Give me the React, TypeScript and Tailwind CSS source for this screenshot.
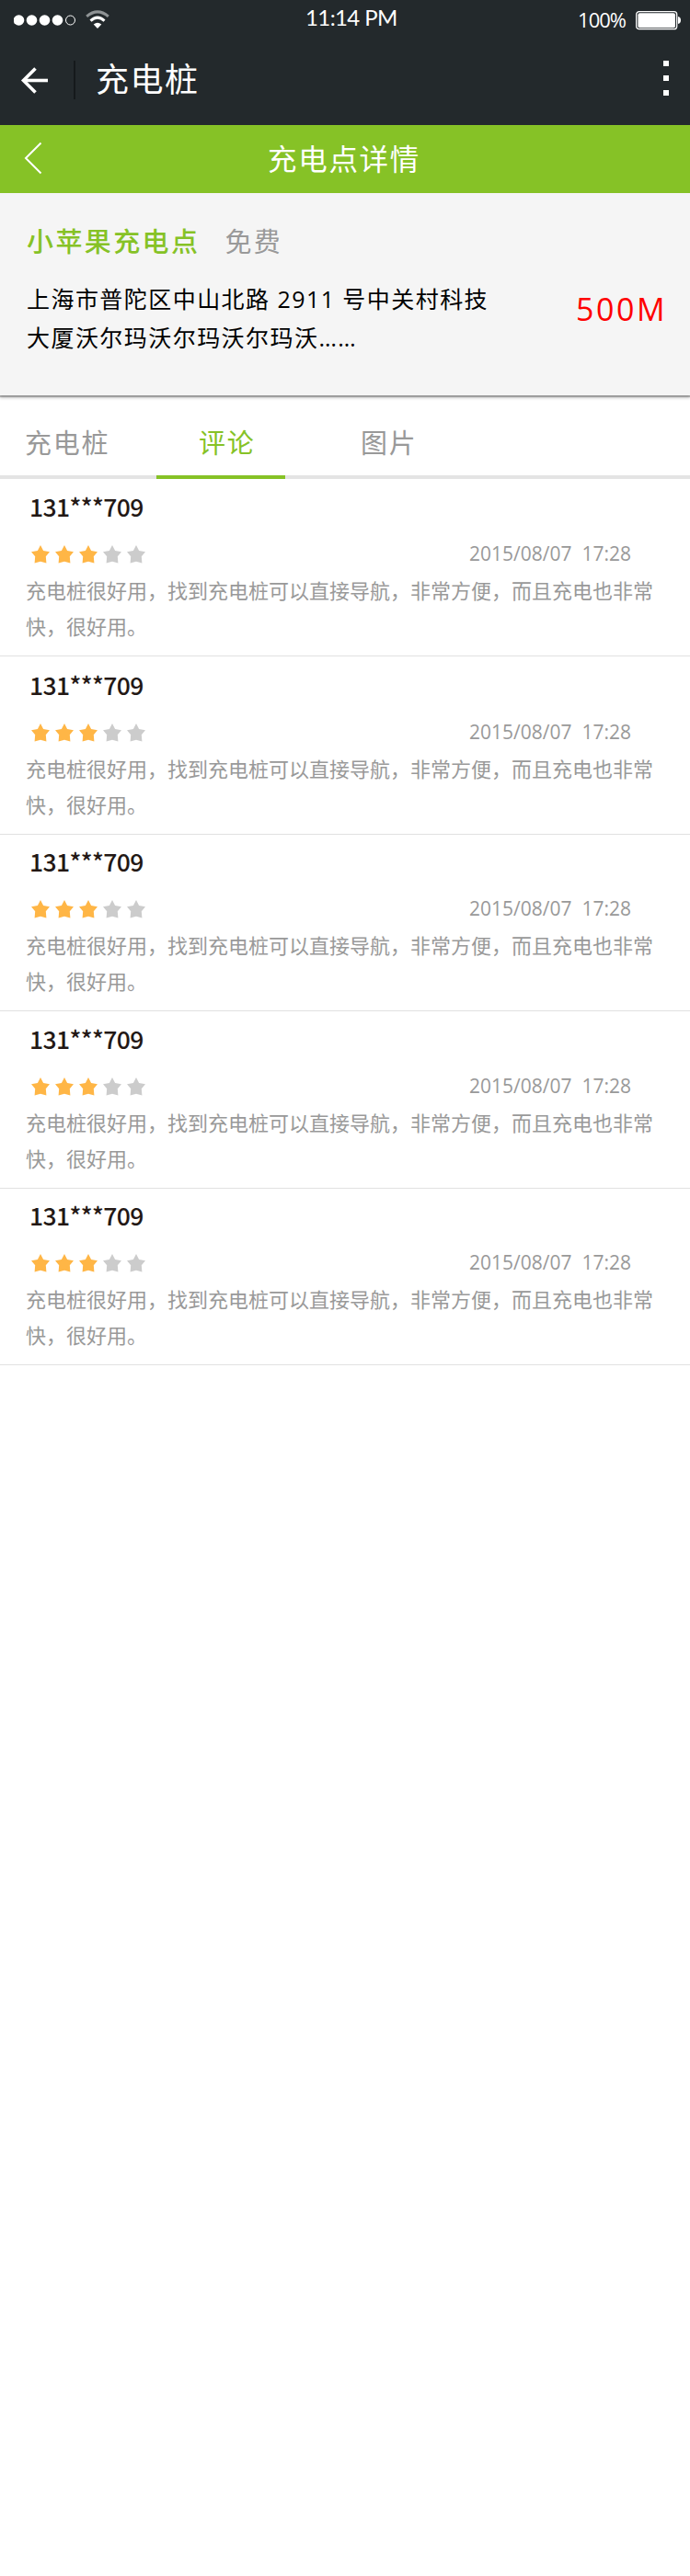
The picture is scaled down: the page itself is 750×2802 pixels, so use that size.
const uiFont = "font-['Open_Sans','Noto_Sans_CJK_SC',sans-serif]";

const reviews = [
  { height: 'h-[193px]', score: 3 },
  { height: 'h-[194px]', score: 3 },
  { height: 'h-[192px]', score: 3 },
  { height: 'h-[193px]', score: 3 },
  { height: 'h-[192px]', score: 3 },
];

function StatusBar() {
  return (
    <div className="grid h-11 grid-cols-3 text-white">
      <div className="flex items-start pl-[15px]">
        <svg className="mt-[11px]" width="106" height="22" viewBox="0 0 106 22" fill="none">
          <g fill="#fff">
            <circle cx="5.5" cy="11" r="5.8" />
            <circle cx="19.5" cy="11" r="5.8" />
            <circle cx="33.5" cy="11" r="5.8" />
            <circle cx="47.5" cy="11" r="5.8" />
          </g>
          <circle cx="61.5" cy="11" r="5" stroke="#fff" strokeWidth="1" />
          <path d="M79.200 6.800 Q91 -3 102.800 6.800" stroke="#8f9395" strokeWidth="3" />
          <path d="M83.500 11.600 Q91 4.700 98.500 11.600" stroke="#fff" strokeWidth="3" />
          <path d="M86.700 15.400 Q91 12 95.300 15.400 L91 20 Z" fill="#fff" />
        </svg>
      </div>
      <div className="pl-[82px] pt-[6px] font-['Lato'] text-[24px] leading-[26px] tracking-[-0.6px] whitespace-nowrap">
        11:14 PM
      </div>
      <div className="flex items-start justify-end pr-[9px]">
        <span className="mt-[8px] mr-[11px] font-['Open_Sans'] text-[22px] leading-[26px] font-normal tracking-[-1px]">100%</span>
        <svg className="mt-[12px]" width="50" height="21" viewBox="0 0 50 21" fill="none">
          <rect x="0.700" y="0.700" width="44" height="19" rx="3" stroke="#fff" strokeWidth="1.300" />
          <rect x="2.400" y="2.200" width="40.600" height="16" rx="2" fill="#fff" />
          <path d="M46 6 Q49 6.500 49 10 Q49 13.500 46 14 Z" fill="#fff" />
        </svg>
      </div>
    </div>
  );
}

function AppBar() {
  return (
    <div className="flex h-[92px] pl-[22px] text-white">
      <svg className="mt-[28px]" width="32" height="32" viewBox="0 0 32 32" fill="none" stroke="#fff" strokeWidth="3.600">
        <path d="M30 15.500 H4" />
        <path d="M16.500 2.500 L3.500 15.500 L16.500 28.500" />
      </svg>
      <div className="mt-[22px] ml-[26px] h-[42px] w-[2px] bg-[#15191b]" />
      <h1 className="mt-[18px] ml-[22px] text-[36px] leading-[50px] tracking-[1.5px]">充电桩</h1>
      <div className="mt-[22px] mr-[23px] ml-auto flex flex-col gap-[10px]">
        <i className="size-[6px] bg-white" />
        <i className="size-[6px] bg-white" />
        <i className="size-[6px] bg-white" />
      </div>
    </div>
  );
}

function TitleBar() {
  return (
    <div className="flex h-[74px] bg-[#86c226] text-white">
      <svg className="mt-[18px] ml-[26px]" width="20" height="36" viewBox="0 0 20 36" fill="none" stroke="#fff" strokeWidth="2">
        <path d="M18.500 1.500 L2 18 L18.500 34.500" />
      </svg>
      <h2 className="mt-[15px] ml-[245px] text-[31.500px] leading-[44px] tracking-[1.700px]">充电点详情</h2>
    </div>
  );
}

function StationInfo() {
  return (
    <section className="flex h-[220px] bg-[#f5f5f5] shadow-[0_2px_1px_0_rgba(0,0,0,0.250),0_3px_3px_0_rgba(0,0,0,0.200)]">
      <div className="ml-[29px] w-[560px]">
        <div className="mt-[33px] flex text-[29px] leading-[40px] tracking-[2.400px]">
          <span className="font-medium text-[#86c226]">小苹果充电点</span>
          <span className="ml-[27px] text-[#999]">免费</span>
        </div>
        <p className="mt-[21px] text-[25px] leading-[42px] tracking-[1.450px] text-black">
          上海市普陀区中山北路 2911 号中关村科技
          <br />
          大厦沃尔玛沃尔玛沃尔玛沃……
        </p>
      </div>
      <div className="mt-[104px] ml-[37px] text-[34px] leading-[44px] tracking-[2.600px] text-[#ff0000]">500M</div>
    </section>
  );
}

function Tabs() {
  return (
    <nav className="flex h-[91px] text-[29px] leading-[40px] tracking-[1.700px] text-[#999]">
      <div className="w-[170px] border-b-4 border-[#e4e4e4] pt-[32px] pl-[27px]">充电桩</div>
      <div className="w-[140px] border-b-4 border-[#86c226] pt-[32px] pl-[46px] text-[#86c226]">评论</div>
      <div className="grow border-b-4 border-[#e4e4e4] pt-[32px] pl-[82px]">图片</div>
    </nav>
  );
}

function Star({ on }: { on: boolean }) {
  return (
    <svg width="20" height="20" viewBox="0 0 20 20" fill={on ? '#ffb646' : '#cccccc'}>
      <path d="M10 0 L13.100 5.900 L20 7.200 L15.800 12.300 L16.400 19.600 L10 17.800 L3.600 19.600 L4.200 12.300 L0 7.200 L6.900 5.900 Z" />
    </svg>
  );
}

function Review({ height, score }: { height: string; score: number }) {
  return (
    <article className={`${height} flex flex-col justify-end border-b border-[#e1e1e1] pr-[30px] pb-[13px] pl-[28px]`}>
      <div className="pl-[4px] font-['Noto_Sans_CJK_SC'] text-[26.500px] leading-[36px] font-medium tracking-[-0.600px] text-[#231815]">131***709</div>
      <div className="mt-[17px] flex h-[34px] items-center justify-between pr-[34px] pl-[6px]">
        <div className="flex gap-[6px]">
          {[1, 2, 3, 4, 5].map((n) => (
            <Star key={n} on={n <= score} />
          ))}
        </div>
        <span className="text-[21px] whitespace-pre text-[#999]">2015/08/07  17:28</span>
      </div>
      <p className="mt-[3px] text-[22px] leading-[38.500px] whitespace-nowrap text-[#999]">
        充电桩很好用，找到充电桩可以直接导航，非常方便，而且充电也非常
        <br />
        快，很好用。
      </p>
    </article>
  );
}

export default function App() {
  return (
    <div className={`${uiFont} flex min-h-[2802px] w-[750px] flex-col bg-white`}>
      <header className="bg-[#23292c]">
        <StatusBar />
        <AppBar />
      </header>
      <TitleBar />
      <StationInfo />
      <Tabs />
      {reviews.map((r, i) => (
        <Review key={i} height={r.height} score={r.score} />
      ))}
    </div>
  );
}
